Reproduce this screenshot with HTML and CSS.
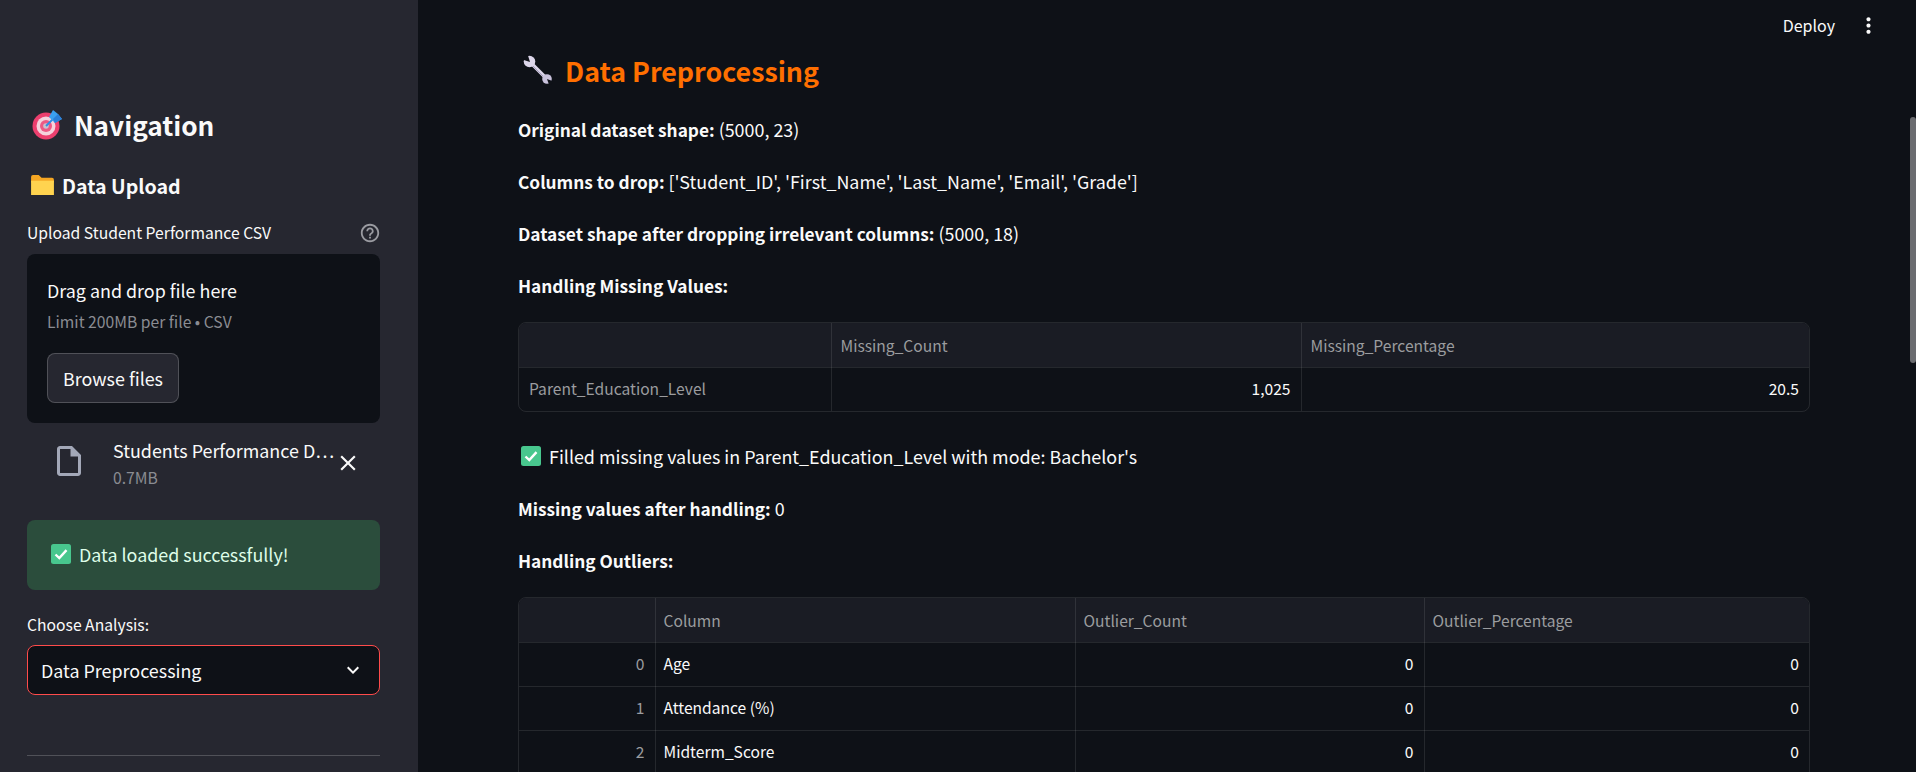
FILE: index.html
```html
<!DOCTYPE html>
<html lang="en">
<head>
    <meta charset="UTF-8">
    <meta name="viewport" content="width=device-width, initial-scale=1.0">
    <title>Student Performance</title>
    <link rel="stylesheet" href="styles.css">
</head>
<body>
    <aside class="sidebar">
        <h2 class="nav-title">
            <svg class="emoji-target" viewBox="0 0 30 30">
                <circle cx="14" cy="16" r="13.5" fill="#ec3f6e"/>
                <circle cx="14" cy="16" r="9.5" fill="#f4d3dd"/>
                <circle cx="14" cy="16" r="6" fill="#ec5a85"/>
                <circle cx="14" cy="16" r="2.8" fill="#c9c3cf"/>
                <path d="M14 16L23 7" stroke="#2f8fe6" stroke-width="2"/>
                <path d="M17 7L21 0l5 4 4 5-7 4-3-3z" fill="#3aa0f0"/>
                <path d="M21 9l5-5 4 5-7 4z" fill="#2b7fd8"/>
            </svg>
            Navigation
        </h2>
        <h3 class="upload-title">
            <svg class="emoji-folder" viewBox="0 0 24 21">
                <path d="M0 2a2 2 0 0 1 2-2h6l3 3h11a2 2 0 0 1 2 2v3H0z" fill="#f5a623"/>
                <path d="M0 6h24v15H0z" fill="#ffd34f"/>
            </svg>
            Data Upload
        </h3>
        <div class="field-label help-row">
            <span>Upload Student Performance CSV</span>
            <svg class="icon-help" viewBox="0 0 24 24"><path d="M11 18h2v-2h-2v2zm1-16C6.48 2 2 6.48 2 12s4.48 10 10 10 10-4.48 10-10S17.52 2 12 2zm0 18c-4.41 0-8-3.59-8-8s3.59-8 8-8 8 3.59 8 8-3.59 8-8 8zm0-14c-2.21 0-4 1.79-4 4h2c0-1.1.9-2 2-2s2 .9 2 2c0 2-3 1.75-3 5h2c0-2.25 3-2.5 3-5 0-2.21-1.79-4-4-4z"/></svg>
        </div>
        <div class="dropzone">
            <div class="drop-text">Drag and drop file here</div>
            <div class="drop-limit">Limit 200MB per file • CSV</div>
            <button class="browse-btn" type="button">Browse files</button>
        </div>
        <div class="file-row">
            <svg class="icon-file" viewBox="0 0 24 24"><path d="M14 2H6c-1.1 0-2 .9-2 2v16c0 1.1.9 2 2 2h12c1.1 0 2-.9 2-2V8l-6-6zM6 20V4h7v5h5v11H6z"/></svg>
            <div class="file-info">
                <div class="file-name">Students Performance D…</div>
                <div class="file-size">0.7MB</div>
            </div>
            <svg class="icon-close" viewBox="0 0 24 24"><path d="M19 6.41L17.59 5 12 10.59 6.41 5 5 6.41 10.59 12 5 17.59 6.41 19 12 13.41 17.59 19 19 17.59 13.41 12z"/></svg>
        </div>
        <div class="success-box">
            <svg class="emoji-check" viewBox="0 0 20 20">
                <rect width="20" height="20" rx="2.5" fill="#48c78e"/>
                <path d="M4.5 10.5l3.8 3.6 7.2-8" fill="none" stroke="#fff" stroke-width="2.4"/>
            </svg>
            Data loaded successfully!
        </div>
        <div class="field-label analysis-label">Choose Analysis:</div>
        <div class="select-box">
            <span>Data Preprocessing</span>
            <svg class="icon-chevron" viewBox="0 0 24 24"><path d="M16.59 8.59L12 13.17 7.41 8.59 6 10l6 6 6-6z"/></svg>
        </div>
        <hr class="side-rule">
    </aside>

    <main class="main">
        <header class="topbar">
            <span class="deploy">Deploy</span>
            <svg class="icon-more" viewBox="0 0 24 24"><path d="M12 8c1.1 0 2-.9 2-2s-.9-2-2-2-2 .9-2 2 .9 2 2 2zm0 2c-1.1 0-2 .9-2 2s.9 2 2 2 2-.9 2-2-.9-2-2-2zm0 6c-1.1 0-2 .9-2 2s.9 2 2 2 2-.9 2-2-.9-2-2-2z"/></svg>
        </header>

        <div class="content">
            <h1 class="page-title">
                <svg class="emoji-wrench" viewBox="0 0 30 30">
                    <path d="M8 8l16 16" stroke="#dcd6ea" stroke-width="3.6"/>
                    <path d="M10 11l14 14" stroke="#a79fc0" stroke-width="1"/>
                    <circle cx="6.5" cy="6.5" r="5.8" fill="#dcd6ea"/>
                    <circle cx="24" cy="24" r="4.8" fill="#c9c2dc"/>
                    <path d="M7 7L-1 4.5 4.5 -1z" fill="#0e1117"/>
                    <path d="M24 24L31 26.5 26.5 31z" fill="#0e1117"/>
                </svg>
                Data Preprocessing
            </h1>

            <p class="line"><strong>Original dataset shape:</strong> (5000, 23)</p>
            <p class="line"><strong>Columns to drop:</strong> ['Student_ID', 'First_Name', 'Last_Name', 'Email', 'Grade']</p>
            <p class="line"><strong>Dataset shape after dropping irrelevant columns:</strong> (5000, 18)</p>
            <p class="line before-table"><strong>Handling Missing Values:</strong></p>

            <div class="table-wrap">
                <table class="data-table missing-table">
                    <colgroup><col class="c1"><col class="c2"><col></colgroup>
                    <thead>
                        <tr><th></th><th>Missing_Count</th><th>Missing_Percentage</th></tr>
                    </thead>
                    <tbody>
                        <tr><td class="row-name">Parent_Education_Level</td><td class="num">1,025</td><td class="num">20.5</td></tr>
                    </tbody>
                </table>
            </div>

            <p class="line filled-line">
                <svg class="emoji-check" viewBox="0 0 20 20">
                    <rect width="20" height="20" rx="2.5" fill="#48c78e"/>
                    <path d="M4.5 10.5l3.8 3.6 7.2-8" fill="none" stroke="#fff" stroke-width="2.4"/>
                </svg>
                Filled missing values in Parent_Education_Level with mode: Bachelor's
            </p>
            <p class="line"><strong>Missing values after handling:</strong> 0</p>
            <p class="line before-table"><strong>Handling Outliers:</strong></p>

            <div class="table-wrap">
                <table class="data-table outlier-table">
                    <colgroup><col class="c1"><col class="c2"><col class="c3"><col></colgroup>
                    <thead>
                        <tr><th></th><th>Column</th><th>Outlier_Count</th><th>Outlier_Percentage</th></tr>
                    </thead>
                    <tbody>
                        <tr><td class="idx">0</td><td>Age</td><td class="num">0</td><td class="num">0</td></tr>
                        <tr><td class="idx">1</td><td>Attendance (%)</td><td class="num">0</td><td class="num">0</td></tr>
                        <tr><td class="idx">2</td><td>Midterm_Score</td><td class="num">0</td><td class="num">0</td></tr>
                        <tr><td></td><td></td><td></td><td></td></tr>
                    </tbody>
                </table>
            </div>
        </div>
        <div class="scroll-thumb"></div>
    </main>
</body>
</html>
```

FILE: styles.css
```css
* {
    box-sizing: border-box;
}

html, body {
    height: 100%;
}

body {
    margin: 0;
    display: flex;
    height: 772px;
    overflow: hidden;
    background-color: #0e1117;
    color: #fafafa;
    font-family: "Noto Sans CJK JP", "Noto Sans", sans-serif;
    font-size: 16px;
}

svg {
    flex-shrink: 0;
}

/* sidebar */
.sidebar {
    width: 418px;
    height: 772px;
    flex-shrink: 0;
    padding: 103px 38px 0 27px;
    background-color: #262730;
    display: flex;
    flex-direction: column;
}

.nav-title {
    margin: 0;
    height: 44px;
    padding-left: 5px;
    display: flex;
    align-items: center;
    gap: 12px;
    font-size: 26.2px;
    font-weight: 600;
}

.emoji-target {
    width: 30px;
    height: 30px;
}

.upload-title {
    margin: 22px 0 0;
    height: 32px;
    padding-left: 4px;
    display: flex;
    align-items: center;
    gap: 8px;
    font-size: 19.6px;
    font-weight: 600;
}

.emoji-folder {
    width: 23px;
    height: 20px;
}

.field-label {
    font-size: 15.7px;
    line-height: 20px;
}

.help-row {
    margin-top: 22px;
    height: 20px;
    display: flex;
    align-items: center;
    justify-content: space-between;
}

.icon-help {
    width: 22px;
    height: 22px;
    margin-right: -1px;
    fill: #9a9ba1;
}

.dropzone {
    margin-top: 11px;
    height: 169px;
    padding: 24px 20px 0;
    border-radius: 8px;
    background-color: #0e1117;
}

.drop-text {
    font-size: 17.9px;
    line-height: 24px;
}

.drop-limit {
    margin-top: 10px;
    font-size: 15.7px;
    line-height: 20px;
    color: #8a8c92;
}

.browse-btn {
    margin-top: 21px;
    width: 132px;
    height: 50px;
    border: 1px solid rgba(250, 250, 250, 0.2);
    border-radius: 8px;
    background-color: #262730;
    color: #fafafa;
    font: inherit;
    font-size: 17.9px;
}

.file-row {
    margin-top: 11px;
    height: 62px;
    padding-left: 24px;
    display: flex;
    align-items: flex-start;
}

.icon-file {
    width: 36px;
    height: 36px;
    fill: #a3a8b8;
    margin-top: 9px;
}

.file-info {
    margin: 4px 0 0 26px;
    width: 222px;
}

.file-name {
    font-size: 17.9px;
    line-height: 24px;
    white-space: nowrap;
}

.file-size {
    margin-top: 6px;
    font-size: 15.7px;
    line-height: 20px;
    color: #8a8c92;
}

.icon-close {
    width: 26px;
    height: 26px;
    fill: #fafafa;
    margin-top: 16px;
}

.success-box {
    margin-top: 24px;
    height: 70px;
    padding: 0 0 2px 24px;
    display: flex;
    align-items: center;
    gap: 8px;
    border-radius: 8px;
    background-color: #2b4d3c;
    color: #dffde9;
    font-size: 17.9px;
}

.emoji-check {
    width: 20px;
    height: 20px;
}

.analysis-label {
    margin-top: 25px;
}

.select-box {
    margin-top: 10px;
    height: 50px;
    padding: 0 14px 0 13px;
    display: flex;
    align-items: center;
    justify-content: space-between;
    border: 1px solid #ff4b4b;
    border-radius: 8px;
    background-color: #0e1117;
    font-size: 17.9px;
}

.icon-chevron {
    width: 24px;
    height: 24px;
    fill: #fafafa;
}

.side-rule {
    width: 100%;
    margin: 60px 0 0;
    border: none;
    border-top: 1px solid rgba(250, 250, 250, 0.2);
}

/* main area */
.main {
    flex: 1;
    height: 772px;
    overflow: hidden;
    position: relative;
}

.topbar {
    height: 50px;
    padding: 0 35px 0 0;
    display: flex;
    align-items: center;
    justify-content: flex-end;
    gap: 21px;
}

.deploy {
    font-size: 16px;
}

.icon-more {
    width: 25px;
    height: 25px;
    fill: #fafafa;
}

.content {
    padding: 0 106px 0 100px;
}

.page-title {
    margin: -1px 0 24px;
    height: 42px;
    padding-left: 5px;
    display: flex;
    align-items: center;
    gap: 12px;
    font-size: 26.8px;
    font-weight: 700;
    color: #ff6f00;
}

.emoji-wrench {
    width: 30px;
    height: 30px;
}

.line {
    margin: 0 0 24px;
    height: 28px;
    line-height: 28px;
    font-size: 17.9px;
}

.line strong {
    font-size: 17.3px;
    font-weight: 700;
}

.before-table {
    margin-bottom: 23px;
}

.filled-line {
    margin-top: 30px;
    padding-left: 3px;
    display: flex;
    align-items: center;
    gap: 8px;
}

.table-wrap {
    border: 1px solid rgba(250, 250, 250, 0.1);
    border-radius: 8px;
    overflow: hidden;
}

.data-table {
    width: 100%;
    table-layout: fixed;
    border-collapse: collapse;
    font-size: 15.6px;
}

.data-table th {
    height: 44px;
    padding: 0 8px;
    text-align: left;
    font-weight: 400;
    background-color: #1a1c24;
    color: #9b9c9f;
    border-bottom: 1px solid rgba(250, 250, 250, 0.1);
    border-right: 1px solid rgba(250, 250, 250, 0.1);
}

.data-table td {
    height: 44px;
    padding: 0 8px 2px;
    border-bottom: 1px solid rgba(250, 250, 250, 0.1);
    border-right: 1px solid rgba(250, 250, 250, 0.1);
}

.data-table th:last-child,
.data-table td:last-child {
    border-right: none;
}

.data-table tbody tr:last-child td {
    border-bottom: none;
}

.data-table .num {
    padding-right: 10px;
    text-align: right;
}

.data-table .idx {
    padding-right: 10px;
    text-align: right;
    color: #9b9c9f;
}

.data-table .row-name {
    padding-left: 10px;
    color: #9b9c9f;
}

.missing-table th {
    padding-left: 9px;
}

.missing-table .c1 {
    width: 312px;
}

.missing-table .c2 {
    width: 470px;
}

.outlier-table .c1 {
    width: 136px;
}

.outlier-table .c2 {
    width: 420px;
}

.outlier-table .c3 {
    width: 349px;
}

.scroll-thumb {
    position: absolute;
    right: 0;
    top: 117px;
    width: 6px;
    height: 246px;
    border-radius: 3px;
    background-color: #6b6c70;
}
```
